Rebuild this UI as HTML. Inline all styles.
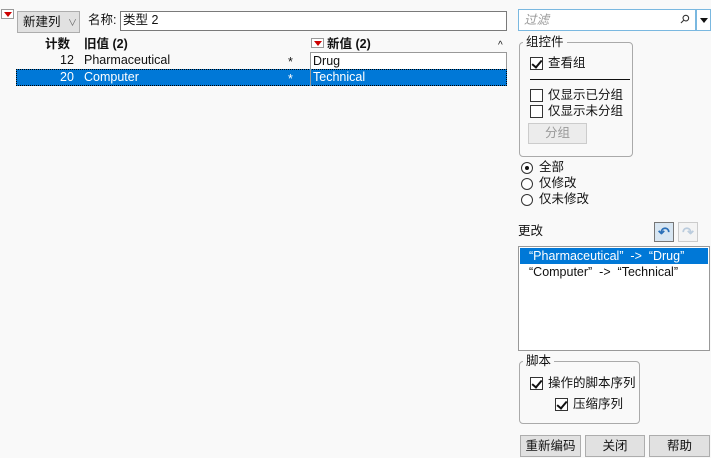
<!DOCTYPE html>
<html><head><meta charset="utf-8"><style>
body{margin:0;width:711px;height:458px;background:#f9f9f9;position:relative;overflow:hidden;font-family:"Liberation Sans","Noto Sans CJK SC",sans-serif;font-size:12.5px;color:#111;line-height:15px}
.a{position:absolute;white-space:nowrap;line-height:15px}
.btn{position:absolute;border:1px solid #adadad;background:#e1e1e1;box-sizing:border-box;text-align:center}
.cb{position:absolute;width:13px;height:13px;border:1px solid #333;box-sizing:border-box;background:#fff}
.cb.c::after{content:"";position:absolute;left:3px;top:0px;width:4px;height:8px;border:solid #111;border-width:0 2px 2px 0;transform:rotate(40deg)}
.rd{position:absolute;width:12px;height:12px;border:1px solid #333;border-radius:50%;box-sizing:border-box;background:#fff}
.tri{position:absolute;width:13px;height:10px;background:#fff;border:1px solid #999;box-sizing:border-box}
.tri::after{content:"";position:absolute;left:2px;top:2px;border-left:4px solid transparent;border-right:4px solid transparent;border-top:5px solid #c00}
.grp{position:absolute;border:1px solid #aaa;border-radius:4px;box-sizing:border-box}
.lg{position:absolute;background:#f9f9f9;padding:0 3px;line-height:15px}
</style></head><body>
<div class="tri" style="left:1px;top:9px"></div>
<div class="btn" style="left:17px;top:11px;width:63px;height:22px;line-height:20px;text-align:left;padding-left:5px">新建列 <span style="font-size:9px;color:#666;margin-left:4px">∨</span></div>
<div class="a" style="left:88px;top:13px">名称:</div>
<div class="a" style="left:120px;top:11px;width:387px;height:20px;border:1px solid #7a7a7a;background:#fff;box-sizing:border-box;padding-left:2px;line-height:17px">类型 2</div>
<div class="a" style="left:45px;top:37px;font-weight:bold">计数</div>
<div class="a" style="left:84px;top:37px;font-weight:bold">旧值 (2)</div>
<div class="tri" style="left:311px;top:38px"></div>
<div class="a" style="left:327px;top:37px;font-weight:bold">新值 (2)</div>
<div class="a" style="left:498px;top:38px;font-size:10px">^</div>
<div class="a" style="left:60px;top:53px">12</div>
<div class="a" style="left:84px;top:53px">Pharmaceutical</div>
<div class="a" style="left:288px;top:55px">*</div>
<div class="a" style="left:310px;top:52px;width:197px;height:18px;border:1px solid #999;background:#fff;box-sizing:border-box;padding-left:2px;line-height:16px">Drug</div>
<div class="a" style="left:16px;top:69px;width:491px;height:17px;background:#0078d7;border:1px dotted #000;box-sizing:border-box;color:#fff"></div>
<div class="a" style="left:60px;top:70px;color:#fff">20</div>
<div class="a" style="left:84px;top:70px;color:#fff">Computer</div>
<div class="a" style="left:288px;top:72px;color:#fff">*</div>
<div class="a" style="left:310px;top:69px;width:1px;height:17px;background:#999"></div>
<div class="a" style="left:313px;top:70px;color:#fff">Technical</div>

<div class="a" style="left:518px;top:9px;width:178px;height:22px;border:1px solid #7ab8e0;background:#fff;box-sizing:border-box;color:#999;font-style:italic;padding-left:5px;line-height:20px">过滤</div>
<div class="a" style="left:680px;top:12px;font-size:12px;color:#333;transform:rotate(45deg)">⚲</div>
<div class="a" style="left:696px;top:9px;width:15px;height:22px;border:1px solid #7ab8e0;background:#fff;box-sizing:border-box"><div style="position:absolute;left:3px;top:8px;border-left:4px solid transparent;border-right:4px solid transparent;border-top:5px solid #111"></div></div>

<div class="grp" style="left:519px;top:42px;width:114px;height:115px"></div>
<div class="lg" style="left:523px;top:35px">组控件</div>
<div class="cb c" style="left:530px;top:57px"></div><div class="a" style="left:548px;top:56px">查看组</div>
<div class="a" style="left:530px;top:79px;width:100px;height:1px;background:#111"></div>
<div class="cb" style="left:530px;top:89px"></div><div class="a" style="left:548px;top:88px">仅显示已分组</div>
<div class="cb" style="left:530px;top:105px"></div><div class="a" style="left:548px;top:104px">仅显示未分组</div>
<div class="btn" style="left:528px;top:123px;width:59px;height:21px;line-height:19px;color:#999;background:#ececec;border-color:#ccc">分组</div>

<div class="rd" style="left:521px;top:162px"><div style="position:absolute;left:3px;top:3px;width:4px;height:4px;border-radius:50%;background:#111"></div></div><div class="a" style="left:539px;top:160px">全部</div>
<div class="rd" style="left:521px;top:178px"></div><div class="a" style="left:539px;top:176px">仅修改</div>
<div class="rd" style="left:521px;top:194px"></div><div class="a" style="left:539px;top:192px">仅未修改</div>

<div class="a" style="left:518px;top:224px">更改</div>
<div class="a" style="left:654px;top:222px;width:20px;height:20px;border:1px solid #777;background:#d8e6f2;box-sizing:border-box;color:#2a6fb8;font-size:14px;text-align:center;line-height:18px;font-weight:bold">↶</div>
<div class="a" style="left:678px;top:222px;width:20px;height:20px;border:1px solid #ccc;background:#f4f4f4;box-sizing:border-box;color:#bcd;font-size:14px;text-align:center;line-height:18px;font-weight:bold">↷</div>
<div class="a" style="left:518px;top:246px;width:192px;height:105px;border:1px solid #999;background:#fff;box-sizing:border-box"></div>
<div class="a" style="left:520px;top:248px;width:188px;height:16px;background:#0078d7"></div>
<div class="a" style="left:529px;top:249px;color:#fff">“Pharmaceutical”&nbsp; -&gt;&nbsp; “Drug”</div>
<div class="a" style="left:529px;top:265px">“Computer”&nbsp; -&gt;&nbsp; “Technical”</div>

<div class="grp" style="left:519px;top:361px;width:121px;height:63px"></div>
<div class="lg" style="left:523px;top:354px">脚本</div>
<div class="cb c" style="left:530px;top:377px"></div><div class="a" style="left:548px;top:376px">操作的脚本序列</div>
<div class="cb c" style="left:555px;top:398px"></div><div class="a" style="left:573px;top:397px">压缩序列</div>

<div class="btn" style="left:520px;top:435px;width:61px;height:22px;line-height:20px">重新编码</div>
<div class="btn" style="left:585px;top:435px;width:60px;height:22px;line-height:20px">关闭</div>
<div class="btn" style="left:649px;top:435px;width:61px;height:22px;line-height:20px">帮助</div>
</body></html>
